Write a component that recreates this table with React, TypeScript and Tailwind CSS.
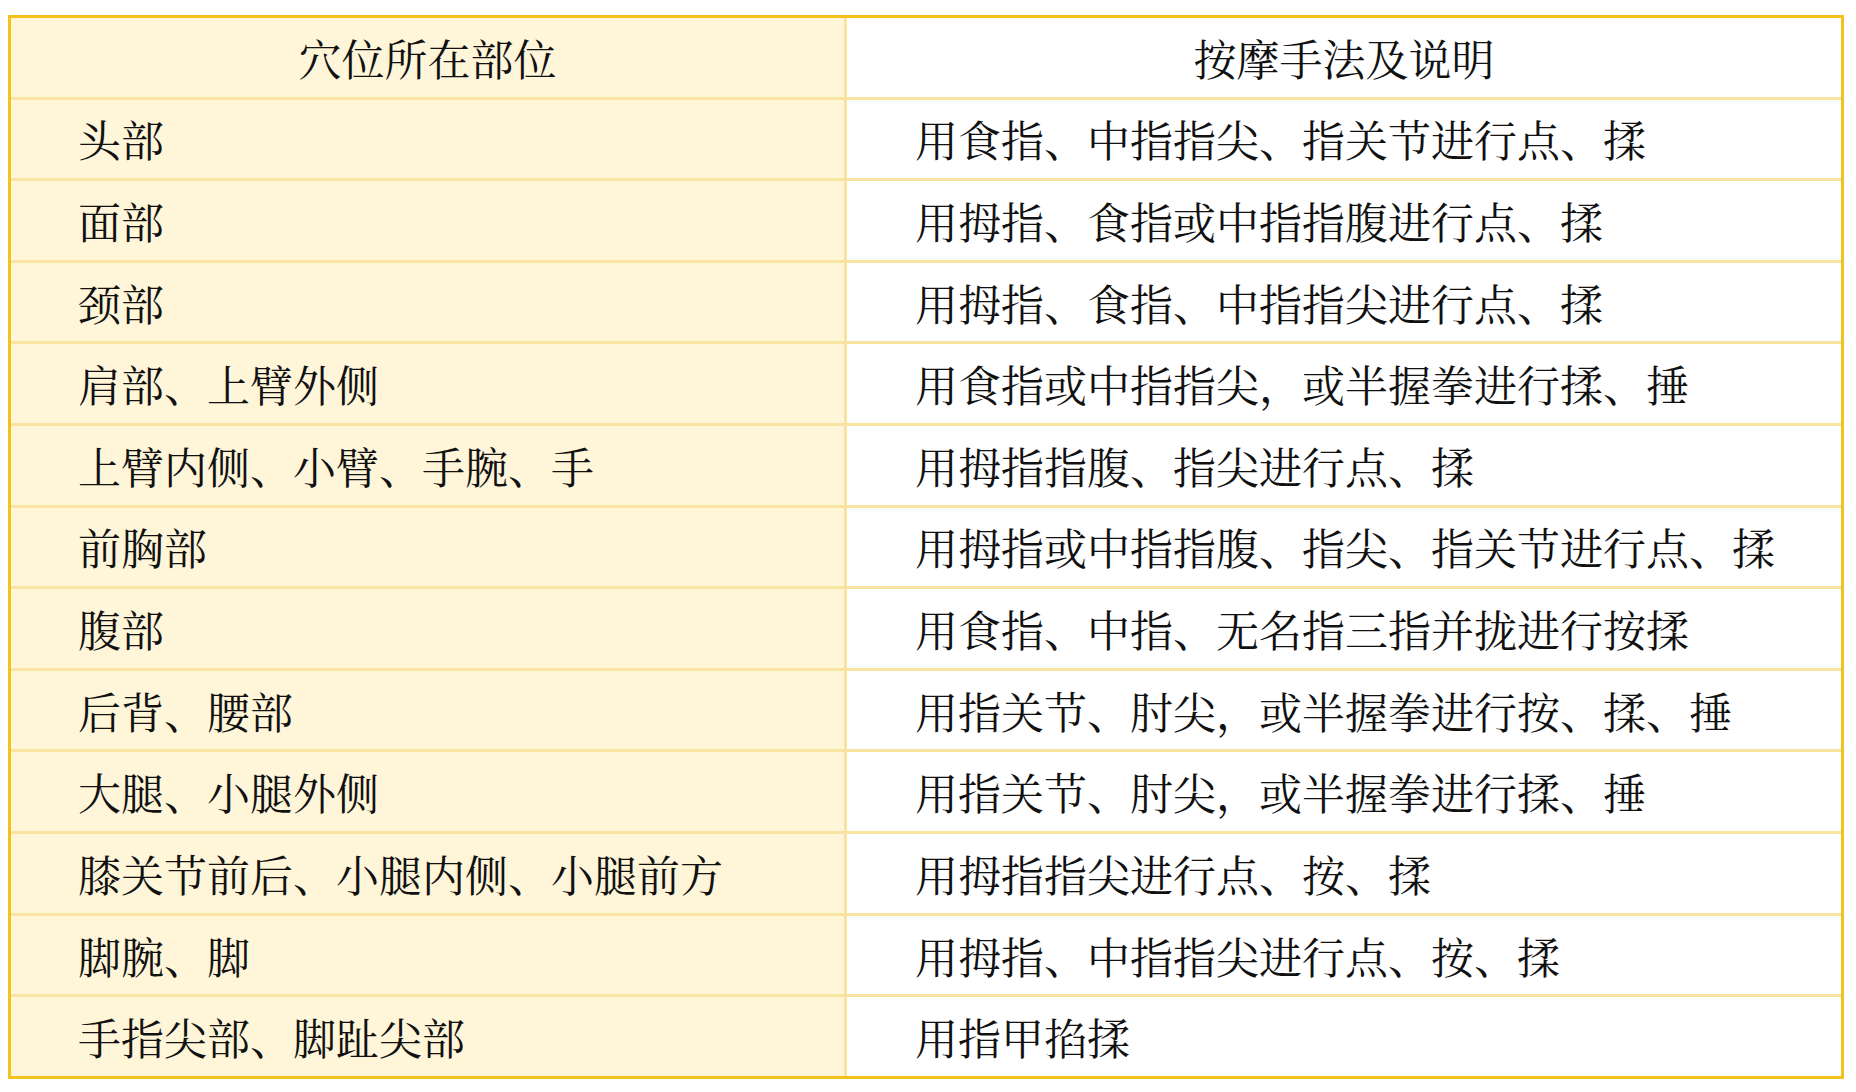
const rows: [string, string][] = [
  ["头部", "用食指、中指指尖、指关节进行点、揉"],
  ["面部", "用拇指、食指或中指指腹进行点、揉"],
  ["颈部", "用拇指、食指、中指指尖进行点、揉"],
  ["肩部、上臂外侧", "用食指或中指指尖，或半握拳进行揉、捶"],
  ["上臂内侧、小臂、手腕、手", "用拇指指腹、指尖进行点、揉"],
  ["前胸部", "用拇指或中指指腹、指尖、指关节进行点、揉"],
  ["腹部", "用食指、中指、无名指三指并拢进行按揉"],
  ["后背、腰部", "用指关节、肘尖，或半握拳进行按、揉、捶"],
  ["大腿、小腿外侧", "用指关节、肘尖，或半握拳进行揉、捶"],
  ["膝关节前后、小腿内侧、小腿前方", "用拇指指尖进行点、按、揉"],
  ["脚腕、脚", "用拇指、中指指尖进行点、按、揉"],
  ["手指尖部、脚趾尖部", "用指甲掐揉"],
];

export default function App() {
  return (
    <div className="min-h-[1092px] w-[1856px] bg-white pl-[8px] pt-[15px]">
      <div className="flex h-[1064px] w-[1836px] flex-col border-[3px] border-[#f5c21b] font-['Noto_Serif_CJK_SC','Noto_Sans_CJK_SC',serif] text-[43px] leading-none text-[#111]">
        {/* Header */}
        <div className="flex flex-1">
          <div className="flex w-[836px] items-center justify-center border-r-[3px] border-[#f8e3a0] bg-[#fff5d9]">
            穴位所在部位
          </div>
          <div className="flex flex-1 items-center justify-center bg-white">
            按摩手法及说明
          </div>
        </div>

        {rows.map(([part, method]) => (
          <div key={part} className="flex flex-1 border-t-[3px] border-[#f8e3a0]">
            <div className="flex w-[836px] items-center border-r-[3px] border-[#f8e3a0] bg-[#fff5d9] pl-[67px]">
              {part}
            </div>
            <div className="flex flex-1 items-center bg-white pl-[68px]">{method}</div>
          </div>
        ))}
      </div>
    </div>
  );
}
